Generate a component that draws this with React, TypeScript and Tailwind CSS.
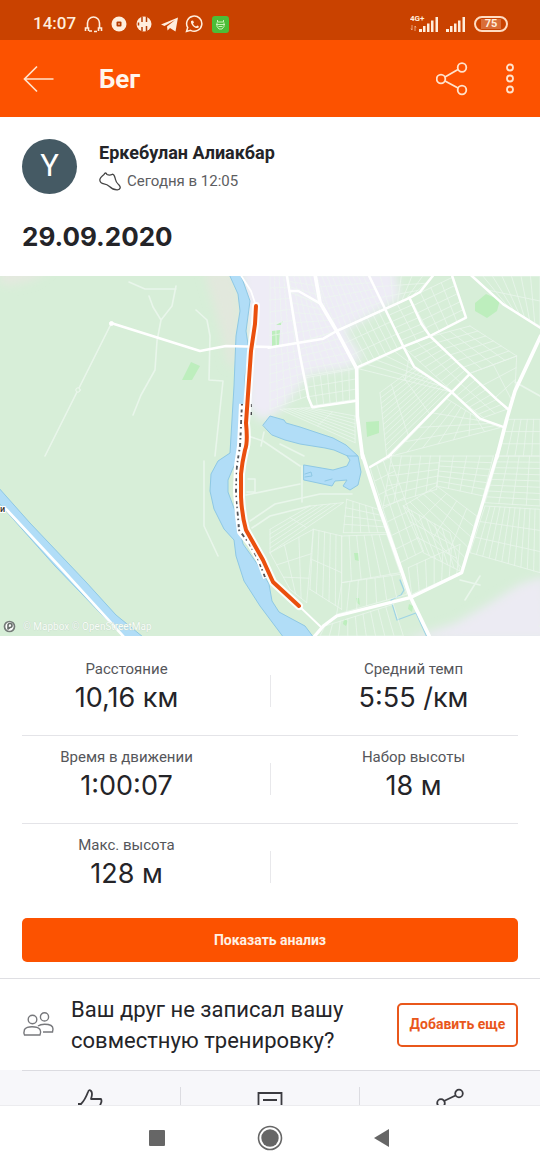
import React from "react";

type Point = [number, number];
type Block = { corners: [Point, Point, Point, Point]; across: number; along: number };

/* Street grids. Corners run clockwise from the top left. */
const northBlocks: Block[] = [
  { corners: [[0, 0], [55, 0], [75, 200], [0, 215]], across: 4, along: 6 },
  { corners: [[55, 0], [135, 0], [165, 90], [65, 50]], across: 5, along: 3 },
  { corners: [[62, 50], [150, 85], [200, 165], [85, 200]], across: 6, along: 5 },
  { corners: [[0, 215], [85, 200], [115, 360], [0, 400]], across: 5, along: 7 },
  { corners: [[85, 200], [200, 165], [258, 275], [105, 300]], across: 7, along: 5 },
  { corners: [[108, 305], [258, 278], [258, 370], [122, 390]], across: 7, along: 3 },
  { corners: [[140, 0], [295, 0], [345, 98], [200, 162]], across: 10, along: 5 },
  { corners: [[298, 0], [490, 0], [420, 65], [345, 98]], across: 6, along: 3 },
  { corners: [[202, 167], [345, 100], [400, 210], [260, 275]], across: 8, along: 3 },
  { corners: [[345, 100], [418, 67], [480, 180], [402, 212]], across: 2, along: 6 },
  { corners: [[420, 65], [545, 5], [588, 125], [480, 178]], across: 4, along: 5 },
  { corners: [[402, 214], [480, 182], [598, 295], [545, 345]], across: 2, along: 9 },
  { corners: [[480, 182], [600, 150], [740, 240], [600, 292]], across: 4, along: 6 },
  { corners: [[600, 292], [740, 240], [735, 345], [715, 400]], across: 2, along: 3 },
  { corners: [[265, 278], [402, 214], [432, 272], [545, 348]], across: 5, along: 2 },
  { corners: [[545, 350], [600, 297], [710, 400], [640, 425]], across: 2, along: 7 },
  { corners: [[330, 350], [432, 275], [543, 350], [350, 540]], across: 3, along: 12 },
  { corners: [[530, 368], [630, 430], [690, 455], [365, 540]], across: 7, along: 4 },
  { corners: [[610, 0], [810, 0], [810, 150], [700, 85]], across: 7, along: 2 },
  { corners: [[715, 430], [810, 430], [810, 540], [685, 540]], across: 5, along: 3 },
  { corners: [[30, 400], [120, 395], [255, 420], [255, 500]], across: 7, along: 2 },
];

const southBlocks: Block[] = [
  { corners: [[365, 0], [510, 0], [500, 100], [340, 150]], across: 5, along: 5 },
  { corners: [[300, 35], [360, 5], [460, 285], [390, 320]], across: 3, along: 7 },
  { corners: [[510, 0], [670, 0], [640, 120], [500, 90]], across: 4, along: 6 },
  { corners: [[400, 150], [500, 90], [620, 180], [580, 340]], across: 5, along: 4 },
  { corners: [[400, 150], [540, 230], [570, 345], [460, 290]], across: 6, along: 3 },
  { corners: [[685, 0], [810, 0], [810, 150], [645, 140]], across: 4, along: 8 },
  { corners: [[645, 150], [810, 160], [810, 350], [600, 290]], across: 11, along: 3 },
  { corners: [[230, 130], [325, 160], [350, 230], [220, 230]], across: 5, along: 4 },
  { corners: [[130, 220], [215, 240], [215, 460], [120, 400]], across: 5, along: 2 },
  { corners: [[215, 240], [350, 235], [390, 350], [215, 380]], across: 6, along: 1 },
  { corners: [[215, 380], [390, 355], [410, 415], [200, 475]], across: 7, along: 1 },
  { corners: [[165, 510], [370, 445], [400, 540], [150, 540]], across: 9, along: 1 },
  { corners: [[0, 220], [120, 150], [220, 140], [0, 290]], across: 2, along: 5 },
  { corners: [[0, 290], [130, 220], [110, 440], [60, 400]], across: 3, along: 3 },
  { corners: [[415, 335], [570, 265], [560, 355], [425, 415]], across: 6, along: 1 },
];

function mix(a: Point, b: Point, t: number): Point {
  return [a[0] + (b[0] - a[0]) * t, a[1] + (b[1] - a[1]) * t];
}

function segment(a: Point, b: Point) {
  return `M${a[0].toFixed(1)} ${a[1].toFixed(1)}L${b[0].toFixed(1)} ${b[1].toFixed(1)}`;
}

function streets(blocks: Block[]) {
  return blocks
    .map(({ corners: [a, b, c, d], across, along }) => {
      let path = "";
      for (let i = 0; i <= across; i++) path += segment(mix(a, b, i / across), mix(d, c, i / across));
      for (let i = 0; i <= along; i++) path += segment(mix(a, d, i / along), mix(b, c, i / along));
      return path;
    })
    .join("");
}

function RouteMap() {
  const route =
    "M256 30L255 48L251 75L249 104L246 147Q248 167 245 174Q242 187 241 198V221Q242 240 246 254L263 284L273 306L299 330";
  const third = 1 / 3;
  return (
    <svg
      viewBox="0 0 540 360"
      role="img"
      aria-label="Карта маршрута"
      className="block w-full"
      fill="none"
      strokeLinecap="round"
      strokeLinejoin="round"
    >
      <defs>
        <filter id="soft" x="-10%" y="-10%" width="120%" height="120%">
          <feGaussianBlur stdDeviation="5" />
        </filter>
      </defs>
      <rect width="540" height="360" fill="#d7eed8" />
      <g filter="url(#soft)">
        <path d="M0-8H50L34 4L14 9H0Z" fill="#e4e9df" />
        <path d="M204-5H235L240 40L236 90L228 90L222 60L214 30Z" fill="#e2e8dd" />
        <path d="M240-10H395L400 22L345 55L362 80L350 92L310 98L280 135L262 145L247 130L250 60Z" fill="#eeecf6" />
        <path d="M545 300L520 308L485 330L455 347L400 365H550Z" fill="#ecebf3" />
      </g>
      <g fill="#bdeebd">
        <path d="M191 86L200 90L192 104L182 104Z" />
        <path d="M272 55L280 54L279 69L272 70ZM276 49L283 45L281 49Z" />
        <path d="M475 27L486 18L500 24L497 35L487 42L475 35Z" />
        <path d="M366 146L379 145V157L367 161Z" />
        <path d="M354 277H359V285L355 284ZM356 322L359 322L360 329L357 327ZM344 343L348 345L346 350L343 348ZM409 328L413 330L412 336L408 333Z" />
      </g>

      {/* River, canal and lakes */}
      <g fill="#b1ddf7" stroke="#8ec8e4" strokeWidth="1">
        <path d="M229 -2L238 18L240 35L236 60L234 110L231 160L230 177L218 185L211 198L210 215L214 233L224 253L234 264L236 280L244 305L260 330L275 350L284 362H314L305 350L279 336L272 325L269 308L258 289L243 268L235 235L228 216L228 204L233 192L241 177L244 140L245 100L249 75L246 55L250 25L243 5L240-2Z" />
        <path d="M-2 211L30 247L86 306L116 339L143 361H124L108 345L55 290L-2 226Z" />
        <path d="M263 149L270 140L284 144L286 147L300 151L333 162L346 169L358 180L350 181L334 174L325 172L300 168L285 164L272 159Z" />
        <path d="M304 189L333 194L347 190L350 184L347 180L358 180L361 196L358 209L350 214L343 210L347 204L335 205L332 210L304 204Z" />
      </g>
      <path d="M400 304L404 314L401 319L391 324L397 344L416 337L427 361" stroke="#9fd4e5" strokeWidth="1.3" />
      <path d="M305 198L311 196L312 200L305 201M325 205L332 203" stroke="#8ec8e4" />

      {/* Minor streets */}
      <g stroke="#edf7ef" strokeWidth="2.5" opacity=".85">
        <path transform={`translate(270 0) scale(${third})`} d={streets(northBlocks)} />
        <path transform={`translate(270 180) scale(${third})`} d={streets(southBlocks)} />
      </g>
      <g stroke="#e9f6eb" strokeWidth="1.6">
        <path d="M111 48L78 114L45 180M129 6L145 13H176M149 20L153 31L161 44L172 30L176 10M161 44L157 65L155 94L141 119L133 139M196 34L207 44L210 60L209 104L223 105L215 180M204 185V250L218 280" />
        <path d="M248 160L263 165L300 190M248 203H255V216H247M246 219L300 208" />
        <path d="M250 245L275 228L320 218L352 218M252 252L270 240L310 230" />
        <path d="M261 170L264 156M280 168L304 180M302 190V226" />
        <path d="M540 120L515 106M570 360L540 350M480 300L465 324M460 304L480 309" />
      </g>
      <circle cx="78" cy="114" r="2.2" stroke="#eef8ef" fill="#d7eed8" />

      {/* Main roads */}
      <g stroke="#fff">
        <path d="M111 47L200 75L226 70L270 71L256 71M6 233L60 291L124 361" strokeWidth="2.6" />
        <path d="M240-2L251 15L256 30M299 330L322 352" strokeWidth="1.8" />
        <circle cx="111.5" cy="47.5" r="2" fill="#fff" />
        <g transform={`translate(270 0) scale(${third})`} strokeWidth="7.5">
          <path
            d="M135-5L150 80L200 165L260 278L262 420L278 545M680 545L710 430L735 345L812 180"
            strokeWidth="11"
          />
          <path d="M-5 215L160 188L200 165L420 65L450 48L492-5M50-5L70 120L90 240L115 365L127 394L255 375M60 45H85L150 82" />
          <path d="M295-5L400 212L432 272L545 348L630 428L697 452M260 275L400 212L480 180L588 125L545-5" />
          <path d="M418 65L455 145L480 180L600 295L680 370L717 402M598 295L355 542M600-5L700 85L815 158" />
        </g>
        <g transform={`translate(270 180) scale(${third})`} strokeWidth="10">
          <path d="M277-5L330 160L395 345L420 420L480 545" strokeWidth="11" />
          <path d="M682-5L575 350L420 425L200 480L160 510L130 545" />
          <path d="M362-3L300 33" strokeWidth="7" />
        </g>
      </g>

      {/* Half-hidden river label, then the recorded route */}
      <g strokeLinecap="butt">
        <path d="M242 128L241 150L240 170L237 190L236 215L238 240L240 256L250 268L259 284L266 302" stroke="#fff" strokeWidth="6" />
        <path
          d="M242 128L241 150L240 170L237 190L236 215L238 240L239 254L249 267L258 283L265 301"
          stroke="#55565a"
          strokeWidth="2"
          strokeDasharray="1.5 4 3 2.5 1.5 3.5 4 3"
        />
        <path d="M251 128V131M251 136V139" stroke="#45464a" strokeWidth="2" />
      </g>
      <path d={route} stroke="#fff" strokeWidth="8" opacity=".9" />
      <path d={route} stroke="#ea500e" strokeWidth="4" />

      <text x="0" y="236" fontFamily="Roboto, sans-serif" fontSize="9" fontWeight="500" fill="#333" stroke="#fff" strokeWidth="2" paintOrder="stroke">
        и
      </text>
      <circle cx="9.5" cy="350.5" r="5" fill="#fff" stroke="#747b78" strokeWidth="1.7" />
      <path d="M8 353V349.5A2 2 0 1 1 10 351.5L8 353" stroke="#666d6a" strokeWidth="1.6" />
      <text x="23" y="354" fontFamily="Roboto, sans-serif" fontSize="10" fill="#f8fdf8" stroke="#c4d8c8" strokeWidth=".6" paintOrder="stroke">
        © Mapbox © OpenStreetMap
      </text>
    </svg>
  );
}

function StatusBar() {
  return (
    <div className="flex h-10 items-center justify-between bg-[#c94200] pt-2 pr-8 pl-[33px] text-[#ffeedd]">
      <div className="flex items-center gap-2">
        <span className="text-[17px] font-medium">14:07</span>
        <svg width="120" height="18" viewBox="0 0 120 18" fill="none" stroke="currentColor" aria-hidden="true">
          <path d="M3.5 12.5V8a6 6 0 0 1 12 0v4.5M1.5 16v-3h3v3M14.5 16v-3h3v3M5 16H8M10 16.5h3" strokeWidth="1.6" />
          <circle cx="35" cy="9" r="7.5" fill="currentColor" stroke="none" />
          <rect x="32.5" y="6.5" width="5" height="5" rx="1" fill="#b53b00" stroke="none" />
          <path d="M35 8v2" />
          <circle cx="60" cy="9" r="7.5" fill="currentColor" stroke="none" />
          <path d="M58 2V7M58 12V16M62.5 2V7M62.5 11V16M54.5 7.5V10.5" stroke="#b53b00" strokeWidth="1.5" />
          <path d="M77 9.5L94 2.5L91.5 16.5L86 13L83.5 15.5L83 11.5L91 5L80.5 11Z" fill="currentColor" stroke="none" />
          <path d="M102.5 16.5L103.7 12.5A7.6 7.6 0 1 1 106.6 15.3Z" strokeWidth="1.5" />
          <path d="M107 6c-.5 4 4 7.5 6.5 7 2-.5 1.5-2 0-2.5l-1.5 1c-1.5-.5-2.5-1.5-3-3l1-1-1-2Z" fill="currentColor" stroke="none" />
        </svg>
        <svg width="17" height="17" viewBox="0 0 17 17" fill="none" stroke="#c8f2b4" aria-hidden="true">
          <rect width="17" height="17" rx="3" fill="#4bbd37" stroke="none" />
          <path d="M5.5 4v2h6V4M4 8.5h9M5 6.5v4l2 2.5h3l2-2.5v-4M6.5 10.5h4" />
        </svg>
      </div>
      <div className="flex items-center gap-2">
        <svg width="56" height="18" viewBox="0 0 56 18" fill="currentColor" aria-hidden="true">
          <text x="0" y="6" fontFamily="Roboto, sans-serif" fontSize="8" fontWeight="700">
            4G+
          </text>
          <path d="M9 14h3v3H9zM13 11h2.5v6H13zM17 8.5h2.5V17H17zM21 5.5h2.5V17H21zM25.5 2H28v15h-2.5z" />
          <path d="M36 14h3v3h-3zM40 11h2.5v6H40zM44 8.5h2.5V17H44zM48 5.5h2.5V17H48zM52.5 2H55v15h-2.5z" />
          <path d="M2 10v5m-1-1.5l1 1.5M5 16v-5m1 1.5L5 11" stroke="currentColor" fill="none" strokeWidth=".8" opacity=".7" />
        </svg>
        <span className="flex h-4 w-[34px] items-center justify-center rounded-full border-2 border-[#ffdcc2] bg-[#c94200]">
          <span className="bg-[#d96d38] px-1 text-[11px] leading-[10px] font-bold">75</span>
        </span>
      </div>
    </div>
  );
}

function ShareIcon() {
  return (
    <svg width="32" height="34" viewBox="0 0 32 34" fill="none" stroke="currentColor" strokeWidth="1.8" aria-hidden="true">
      <circle cx="5" cy="17" r="4.3" />
      <circle cx="26" cy="5.5" r="4.3" />
      <circle cx="26" cy="28" r="4.3" />
      <path d="M9 15L22 7.5M9 19L22 26" />
    </svg>
  );
}

function Stat({ label, value }: { label: string; value: string }) {
  return (
    <div className="text-center">
      <dt className="text-[15px] leading-5 text-[#55565a]">{label}</dt>
      <dd className="font-[Inter,sans-serif] text-[27px] leading-[38px] text-[#242428]">{value}</dd>
    </div>
  );
}

function StatRow({ children }: { children: React.ReactNode }) {
  const [left, right] = React.Children.toArray(children);
  return (
    <dl className="grid h-[88px] grid-cols-[1fr_78px_1fr] border-t border-[#e4e4e8] pt-[11px] first:border-transparent">
      {left}
      <div className="mt-4 h-8 w-px justify-self-center bg-[#e8e8eb]" />
      {right}
    </dl>
  );
}

export default function App() {
  return (
    <div className="bg-white font-[Roboto,sans-serif] text-[#242428]">
      <StatusBar />
      <header className="flex h-[77px] items-center bg-[#fc5200] pr-6 pl-[23px] text-[#ffe3cc]">
        <button aria-label="Назад">
          <svg width="32" height="28" viewBox="0 0 32 28" fill="none" stroke="currentColor" strokeWidth="1.7">
            <path d="M14 1.5L1.5 14L14 26.5M1.5 14H30.5" />
          </svg>
        </button>
        <h1 className="ml-11 flex-1 text-[26px] leading-8 font-bold text-[#fff5ec]">Бег</h1>
        <button aria-label="Поделиться">
          <ShareIcon />
        </button>
        <button aria-label="Ещё" className="ml-9">
          <svg width="12" height="32" viewBox="0 0 12 32" fill="none" stroke="currentColor" strokeWidth="1.8">
            <circle cx="6" cy="4.5" r="3" />
            <circle cx="6" cy="15.5" r="3" />
            <circle cx="6" cy="26.5" r="3" />
          </svg>
        </button>
      </header>

      <main>
        <section className="px-[22px] pt-[22px] pb-[21px]">
          <div className="flex items-start gap-[22px]">
            <div className="flex size-[55px] items-center justify-center rounded-full bg-[#455a64] text-[31px] text-white">Y</div>
            <div>
              <p className="text-[18px] leading-7 font-bold">Еркебулан Алиакбар</p>
              <p className="flex items-center gap-[6px] text-[15px] leading-7 text-[#5c5d61]">
                <svg width="22" height="19" viewBox="0 0 22 19" fill="none" stroke="#444" strokeWidth="1.3" strokeLinejoin="round" aria-hidden="true">
                  <path d="M.8 8C.8 6 3 4 5 2.5C6 .5 7 .5 8 2.5C10 3.5 12 3 13.5 2.2C15.5 2.5 15.8 5 16.5 7.5C17 10.5 18.5 11.5 20 13C22 15 21.5 17.5 18.5 17.8C14.5 18 12.5 16.5 10.5 14.5C8.5 12.5 7 12 5 11.8C2.5 11.5 1 10 .8 8Z" />
                </svg>
                Сегодня в 12:05
              </p>
            </div>
          </div>
          <h2 className="mt-6 font-[Inter,sans-serif] text-[26px] leading-9 font-bold">29.09.2020</h2>
        </section>

        <RouteMap />

        <section className="px-[22px] pt-[11px] pb-4">
          <StatRow>
            <Stat label="Расстояние" value="10,16 км" />
            <Stat label="Средний темп" value="5:55 /км" />
          </StatRow>
          <StatRow>
            <Stat label="Время в движении" value="1:00:07" />
            <Stat label="Набор высоты" value="18 м" />
          </StatRow>
          <StatRow>
            <Stat label="Макс. высота" value="128 м" />
          </StatRow>
          <button className="mt-[7px] h-11 w-full rounded-[5px] bg-[#fc5200] text-[14px] font-bold text-[#fff0e4]">
            Показать анализ
          </button>
        </section>

        <section className="flex h-[92px] items-center border-t border-[#dfdfe3] px-[22px]">
          <svg width="32" height="26" viewBox="0 0 32 26" fill="none" stroke="#77787c" strokeWidth="1.4" aria-hidden="true">
            <circle cx="10.5" cy="7.5" r="4.3" />
            <circle cx="22.5" cy="4.9" r="4.1" />
            <path d="M2.5 23C1.5 21 2 19 2.500 17.5C4 15.5 7 14.8 10 14.8S16.5 15.5 18 17.5C18.8 19 19 21 18 23ZM16 14C18 12.5 20 12.3 22.5 12.3C28 12.3 31 14 31 17L30.5 20H21" />
          </svg>
          <p className="ml-[17px] flex-1 text-[22px] leading-[31px]">
            Ваш друг не записал вашу
            <br />
            совместную тренировку?
          </p>
          <button className="h-11 w-[121px] rounded-[5px] border-2 border-[#e9571b] text-[14px] font-bold whitespace-nowrap text-[#e9571b]">
            Добавить еще
          </button>
        </section>

        <div className="h-[35px] overflow-hidden bg-[#f7f7fa] text-[#3b3b40]">
          <div className="ml-[22px] h-px bg-[#dcdce1]" />
          <div className="grid grid-cols-3 pt-4">
            <button aria-label="Нравится" className="flex justify-center">
              <svg width="26" height="28" viewBox="0 0 26 28" fill="none" stroke="currentColor" strokeWidth="1.8" strokeLinejoin="round">
                <path d="M1 17H4Q8 13 11 5Q12 2 14 4Q16 6 14 12H24Q25 14 24 16L20 26H4" />
              </svg>
            </button>
            <button aria-label="Комментарии" className="flex justify-center border-x border-[#dcdce1] pt-1">
              <svg width="26" height="28" viewBox="0 0 26 28" fill="none" stroke="currentColor" strokeWidth="1.8">
                <path d="M1.5 22V2H24.5V22H14L8 27V22ZM6 9H20M6 16H20" />
              </svg>
            </button>
            <button aria-label="Поделиться тренировкой" className="flex justify-center">
              <svg width="28" height="28" viewBox="0 0 28 28" fill="none" stroke="currentColor" strokeWidth="1.8">
                <circle cx="5" cy="16" r="3.8" />
                <circle cx="23" cy="6.5" r="3.8" />
                <circle cx="23" cy="26" r="3.8" />
                <path d="M8 14L19.5 8.5M8 18L19.5 24" />
              </svg>
            </button>
          </div>
        </div>
      </main>

      <nav className="flex h-[65px] items-center justify-center gap-[91px] border-t border-[#ececef] bg-white text-[#666]">
        <button aria-label="Недавние приложения">
          <svg width="18" height="18" viewBox="0 0 18 18" fill="currentColor">
            <rect x="1" y="1" width="16" height="16" rx="1" />
          </svg>
        </button>
        <button aria-label="Домой">
          <svg width="26" height="26" viewBox="0 0 26 26" fill="currentColor">
            <circle cx="13" cy="13" r="11.5" fill="none" stroke="currentColor" strokeWidth="1.6" />
            <circle cx="13" cy="13" r="8.7" />
          </svg>
        </button>
        <button aria-label="Назад в системе">
          <svg width="18" height="20" viewBox="0 0 18 20" fill="currentColor">
            <path d="M15 1V19L0 10Z" />
          </svg>
        </button>
      </nav>
    </div>
  );
}
